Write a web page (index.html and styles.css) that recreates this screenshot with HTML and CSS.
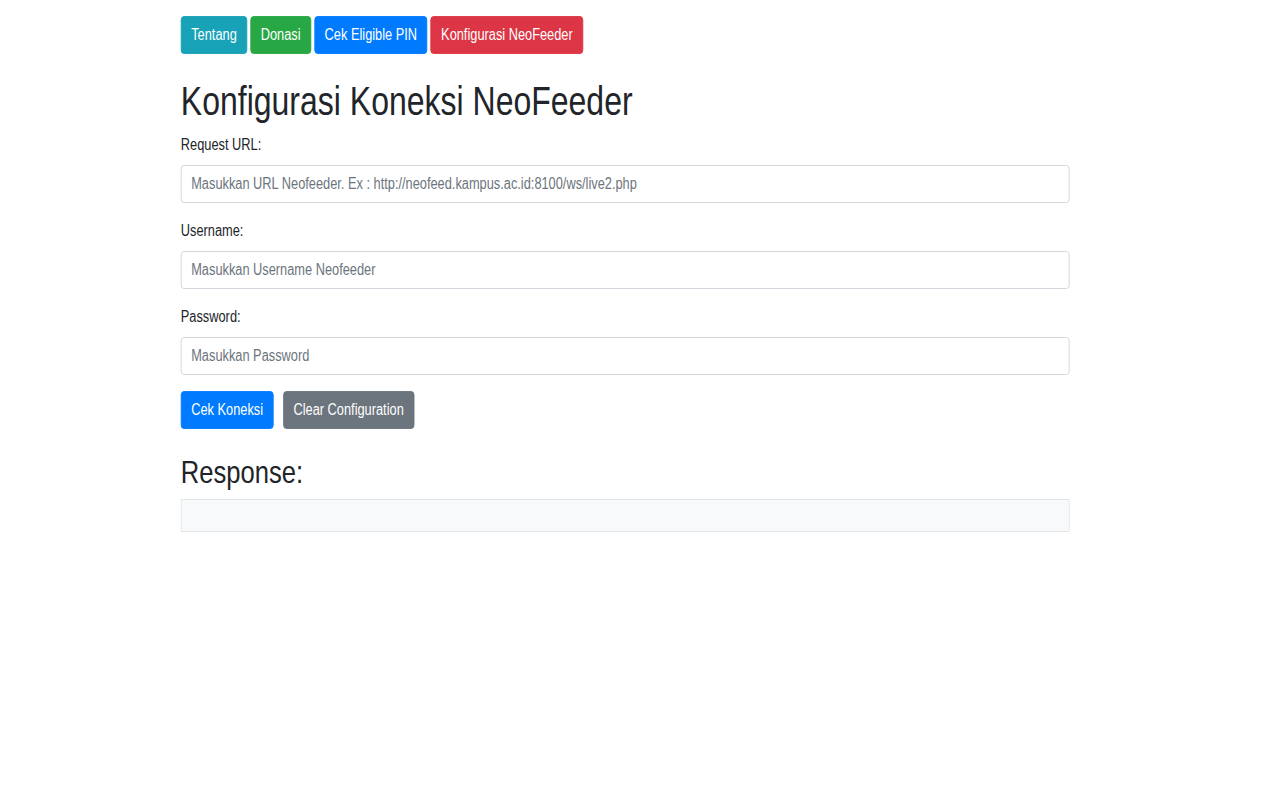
FILE: index.html
```html
<!DOCTYPE html>
<html lang="id">
<head>
<meta charset="utf-8">
<title>Konfigurasi Koneksi NeoFeeder</title>
<link rel="stylesheet" href="styles.css">
</head>
<body>
<div class="page">
<div class="container">
  <nav class="topnav">
    <a class="btn btn-info" href="#">Tentang</a>
    <a class="btn btn-success" href="#">Donasi</a>
    <a class="btn btn-primary" href="#">Cek Eligible PIN</a>
    <a class="btn btn-danger" href="#">Konfigurasi NeoFeeder</a>
  </nav>
  <h1 class="title">Konfigurasi Koneksi NeoFeeder</h1>
  <form class="form">
    <div class="form-group">
      <label for="url">Request URL:</label>
      <input id="url" class="form-control" type="text" placeholder="Masukkan URL Neofeeder. Ex : http://neofeed.kampus.ac.id:8100/ws/live2.php">
    </div>
    <div class="form-group">
      <label for="user">Username:</label>
      <input id="user" class="form-control" type="text" placeholder="Masukkan Username Neofeeder">
    </div>
    <div class="form-group">
      <label for="pass">Password:</label>
      <input id="pass" class="form-control" type="password" placeholder="Masukkan Password">
    </div>
    <div class="actions">
      <button type="button" class="btn btn-primary">Cek Koneksi</button>
      <button type="button" class="btn btn-secondary">Clear Configuration</button>
    </div>
  </form>
  <h2 class="subtitle">Response:</h2>
  <pre class="response"></pre>
</div>
</div>
</body>
</html>
```
FILE: styles.css
```css
* { box-sizing: border-box; }
html { overflow-x: hidden; }
body {
  margin: 0;
  font-family: "Liberation Sans", Arial, sans-serif;
  font-size: 16px;
  line-height: 1.5;
  color: #212529;
  background: #fff;
}
/* the reference is a wider render squeezed horizontally to 80% */
.page {
  width: 1337px;
  transform: scaleX(0.8);
  transform-origin: 0 0;
}
.container {
  width: 1111px;
  margin-left: 226px;
}
.topnav {
  display: flex;
  gap: 4px;
  padding-top: 16px;
}
.btn {
  display: inline-block;
  font-family: inherit;
  font-size: 16px;
  line-height: 24px;
  padding: 6px 12px;
  border: 1px solid transparent;
  border-radius: 4px;
  color: #fff;
  text-decoration: none;
  cursor: pointer;
}
.btn-info { background: #17a2b8; border-color: #17a2b8; }
.btn-success { background: #28a745; border-color: #28a745; }
.btn-primary { background: #007bff; border-color: #007bff; }
.btn-danger { background: #dc3545; border-color: #dc3545; }
.btn-secondary { background: #6c757d; border-color: #6c757d; }
.title {
  margin: 23px 0 8px;
  font-size: 40px;
  font-weight: 500;
  line-height: 1.2;
}
.form { margin: 0; }
.form-group { margin-bottom: 16px; }
label {
  display: block;
  margin-bottom: 8px;
}
.form-control {
  display: block;
  width: 100%;
  height: 38px;
  padding: 6px 12px;
  font-family: inherit;
  font-size: 16px;
  line-height: 24px;
  color: #495057;
  background: #fff;
  border: 1px solid #ced4da;
  border-radius: 4px;
}
.form-control::placeholder { color: #6c757d; opacity: 1; }
.actions {
  display: flex;
  gap: 12px;
}
.subtitle {
  margin: 24px 0 8px;
  font-size: 32px;
  font-weight: 500;
  line-height: 1.2;
}
.response {
  margin: 0;
  height: 33px;
  background: #f8f9fa;
  border: 1px solid #e3e6e9;
}
```
